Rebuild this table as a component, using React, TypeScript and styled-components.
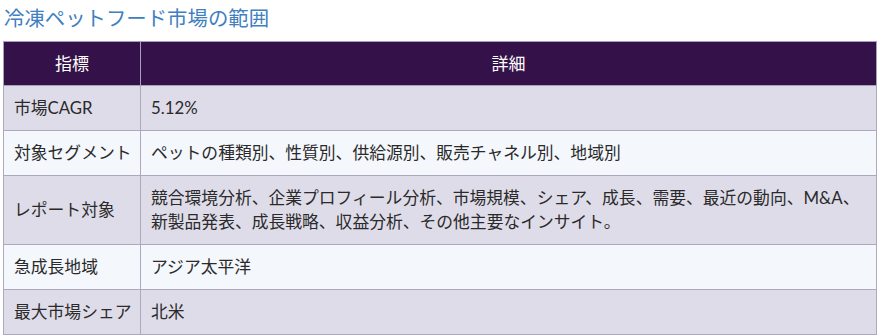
import React from "react";
import styled, { createGlobalStyle } from "styled-components";

const Global = createGlobalStyle`
  html, body { margin: 0; padding: 0; background: #ffffff; }
  body { font-family: Lato, "Noto Sans CJK JP", sans-serif; }
`;

const Page = styled.div`
  padding: 3px 6px 0 3px;
`;

const Title = styled.h2`
  margin: 0 0 0 1px;
  font-size: 20.4px;
  line-height: 30px;
  font-weight: 400;
  color: #3f80c0;
  height: 38px;
`;

const Table = styled.table`
  width: 874px;
  border-collapse: collapse;
  table-layout: fixed;
  font-size: 16.8px;
  color: #2a2a2a;
`;

const HeadCell = styled.th<{ $w?: number }>`
  width: ${(p) => (p.$w ? `${p.$w}px` : "auto")};
  background: #35114a;
  color: #ffffff;
  font-size: 17px;
  font-weight: 400;
  text-align: center;
  padding: 10px;
  line-height: 23px;
  border: 1px solid #a89fbf;
`;

const Row = styled.tr<{ $odd: boolean }>`
  background: ${(p) => (p.$odd ? "#dfdce9" : "#f4f7fc")};
`;

const Cell = styled.td`
  padding: 10px 4px 10px 10px;
  line-height: 24px;
  border: 1px solid #aca8bd;
  vertical-align: middle;
  white-space: nowrap;
  overflow: visible;
`;

const rows: [string, string[]][] = [
  ["市場CAGR", ["5.12%"]],
  ["対象セグメント", ["ペットの種類別、性質別、供給源別、販売チャネル別、地域別"]],
  [
    "レポート対象",
    [
      "競合環境分析、企業プロフィール分析、市場規模、シェア、成長、需要、最近の動向、M&A、",
      "新製品発表、成長戦略、収益分析、その他主要なインサイト。",
    ],
  ],
  ["急成長地域", ["アジア太平洋"]],
  ["最大市場シェア", ["北米"]],
];

export default function App() {
  return (
    <Page>
      <Global />
      <Title>冷凍ペットフード市場の範囲</Title>
      <Table>
        <thead>
          <tr>
            <HeadCell $w={116}>指標</HeadCell>
            <HeadCell>詳細</HeadCell>
          </tr>
        </thead>
        <tbody>
          {rows.map(([k, v], i) => (
            <Row key={k} $odd={i % 2 === 0}>
              <Cell>{k}</Cell>
              <Cell>
                {v.map((line, j) => (
                  <React.Fragment key={j}>
                    {j > 0 && <br />}
                    {line}
                  </React.Fragment>
                ))}
              </Cell>
            </Row>
          ))}
        </tbody>
      </Table>
    </Page>
  );
}
